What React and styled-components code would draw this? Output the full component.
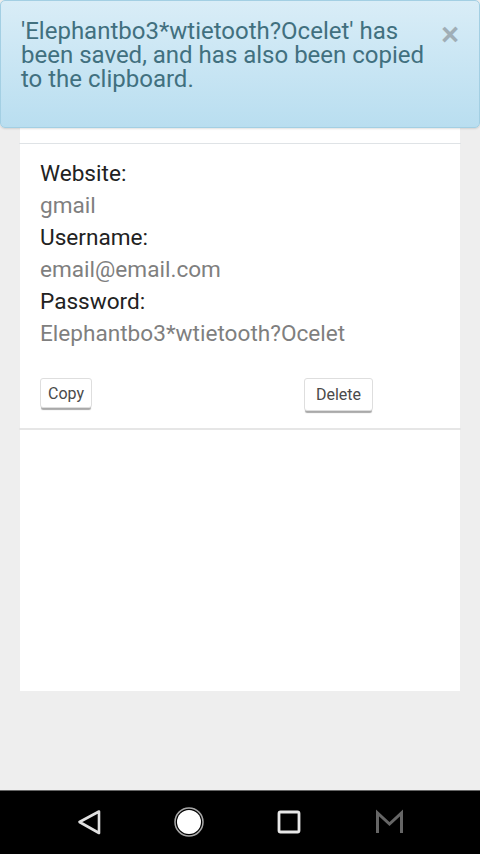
import React from 'react'
import styled, { createGlobalStyle } from 'styled-components'

const GlobalStyle = createGlobalStyle`
  html, body {
    margin: 0;
    padding: 0;
    background: #eeeeee;
  }
  * {
    box-sizing: border-box;
  }
`
const Page = styled.div`
  position: relative;
  display: flex;
  flex-direction: column;
  width: 480px;
  height: 854px;
  overflow: hidden;
  font-family: Roboto, 'Liberation Sans', sans-serif;
`
const Main = styled.main`
  flex: 1;
  padding: 0 20px 99px;
`
const Card = styled.section`
  height: 100%;
  padding-top: 143px;
  background: #fff;
`
const Entry = styled.article`
  height: 287px;
  margin: 0 -1px;
  padding: 14px 21px 0;
  border-top: 1px solid #dfe3e6;
  border-bottom: 2px solid #e6e6e6;
`
const Label = styled.div`
  font-size: 22.6px;
  line-height: 32px;
  color: #222;
`
const Value = styled.div`
  font-size: 22.6px;
  line-height: 32px;
  color: #7f7f7f;
`
const Actions = styled.div`
  display: grid;
  grid-template-columns: 264px auto;
  align-items: start;
  margin-top: 28px;
`
const Button = styled.button`
  justify-self: start;
  width: ${(props) => props.width}px;
  height: ${(props) => props.height}px;
  padding: 0;
  font-family: inherit;
  font-size: 16px;
  color: #4a4a4a;
  background: #fff;
  border: 1px solid #dedede;
  border-radius: 3px;
  box-shadow: 0 3px 1px -1px #a9a9a9;
`
const Alert = styled.div`
  position: absolute;
  top: 0;
  left: 0;
  width: 480px;
  height: 128px;
  padding: 18px 20px;
  font-size: 24px;
  line-height: 24px;
  color: #41707f;
  background: linear-gradient(to bottom, #d9edf7 0%, #b9def0 100%);
  border: 1px solid #a3cfe3;
  border-radius: 5px;
  box-shadow: 0 1px 2px rgba(0, 0, 0, 0.12);
`
const AlertText = styled.div`
  width: 410px;
`
const Close = styled.span`
  position: absolute;
  top: 20px;
  right: 20px;
  font-family: 'Liberation Sans', sans-serif;
  font-size: 31px;
  font-weight: 700;
  line-height: 28px;
  color: #a0aeb6;
`
const NavBar = styled.nav`
  flex: none;
  height: 64px;
  background: #000;
  border-top: 1px solid #666;
`
const NavIcons = styled.svg`
  display: block;
  width: 480px;
  height: 63px;
`

export default function App() {
  return (
    <Page>
      <GlobalStyle />
      <Main>
        <Card>
          <Entry>
            <Label>Website:</Label>
            <Value>gmail</Value>
            <Label>Username:</Label>
            <Value>email@email.com</Value>
            <Label>Password:</Label>
            <Value>Elephantbo3*wtietooth?Ocelet</Value>
            <Actions>
              <Button width={52} height={30}>
                Copy
              </Button>
              <Button width={69} height={33}>
                Delete
              </Button>
            </Actions>
          </Entry>
        </Card>
      </Main>
      <Alert>
        <AlertText>
          'Elephantbo3*wtietooth?Ocelet' has been saved, and has also been
          copied to the clipboard.
        </AlertText>
        <Close>×</Close>
      </Alert>
      <NavBar>
        <NavIcons viewBox='0 0 480 63'>
          <path
            d='M99 20.5 L79.5 31 L99 42 Z'
            fill='none'
            stroke='#e0e0e0'
            strokeWidth='2.6'
            strokeLinejoin='round'
          />
          <circle cx='189' cy='31' r='14' fill='#000' stroke='#a8a8a8' strokeWidth='1.5' />
          <circle cx='189' cy='31' r='12' fill='#fff' />
          <rect
            x='279'
            y='21'
            width='20'
            height='20'
            rx='1.5'
            fill='none'
            stroke='#e8e8e8'
            strokeWidth='2.8'
          />
          <path
            d='M377.5 42 V22 L389.5 33 L401.5 22 V42'
            fill='none'
            stroke='#666'
            strokeWidth='3'
          />
        </NavIcons>
      </NavBar>
    </Page>
  )
}
